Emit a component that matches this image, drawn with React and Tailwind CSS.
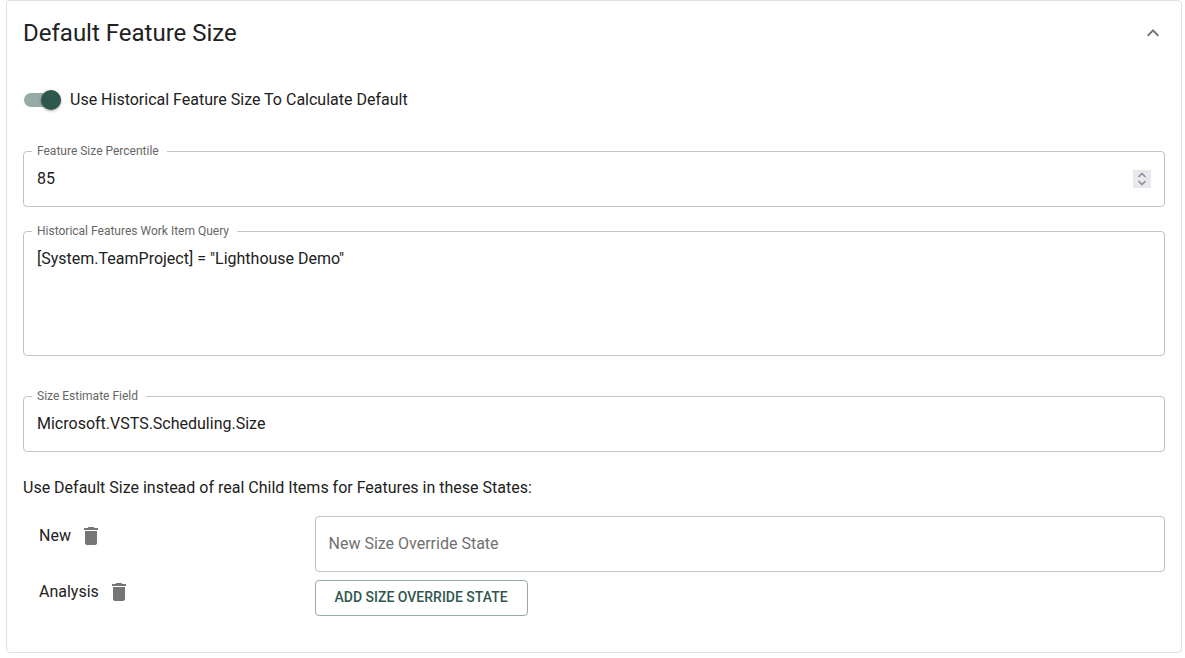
import { useState } from 'react';

function OutlinedField({ id, label, children }) {
  return (
    <div className="relative flex">
      {children}
      <label
        htmlFor={id}
        className="absolute -top-2 left-[9px] bg-white pr-2 pl-[5px] text-[12px] leading-4 text-[#666666]"
      >
        {label}
      </label>
    </div>
  );
}

const inputClass =
  'block h-14 w-full min-w-0 rounded border border-[#c4c4c4] bg-white px-[13px] pb-[2px] text-base text-[#212121] outline-none placeholder:text-[#707070] focus:border-[#30574e]';

function ExpandLessIcon() {
  return (
    <svg viewBox="0 0 24 24" className="size-6" fill="currentColor" aria-hidden="true">
      <path d="m12 8-6 6 1.41 1.41L12 10.83l4.59 4.58L18 14z" />
    </svg>
  );
}

function DeleteIcon() {
  return (
    <svg viewBox="0 0 24 24" className="size-6" fill="currentColor" aria-hidden="true">
      <path d="M6 19c0 1.1.9 2 2 2h8c1.1 0 2-.9 2-2V7H6zM19 4h-3.5l-1-1h-5l-1 1H5v2h14z" />
    </svg>
  );
}

function StepIcon({ d }) {
  return (
    <svg viewBox="0 0 18 9" className="h-[9px] w-[18px]" fill="none" stroke="#8f8f9d" strokeWidth="1.6" aria-hidden="true">
      <path d={d} />
    </svg>
  );
}

export default function App() {
  const [open, setOpen] = useState(true);
  const [historical, setHistorical] = useState(true);
  const [percentile, setPercentile] = useState(85);
  const [query, setQuery] = useState('[System.TeamProject] = "Lighthouse Demo"');
  const [sizeField, setSizeField] = useState('Microsoft.VSTS.Scheduling.Size');
  const [states, setStates] = useState(['New', 'Analysis']);
  const [draft, setDraft] = useState('');

  const addState = () => {
    const name = draft.trim();
    if (name && !states.includes(name)) setStates([...states, name]);
    setDraft('');
  };

  return (
    <main className="bg-white pr-[3px] pb-[5px] pl-[6px] font-[Roboto,sans-serif] text-base text-[#212121]">
      <section className="rounded border border-[#e0e0e0] px-4 pt-4 pb-9">
        <header className="flex items-center justify-between">
          <h2 className="text-2xl leading-8">Default Feature Size</h2>
          <button
            type="button"
            aria-label="Toggle section"
            aria-expanded={open}
            onClick={() => setOpen(!open)}
            className="flex text-[#757575]"
          >
            <ExpandLessIcon />
          </button>
        </header>

        {open && (
          <div className="pt-8">
            <label className="flex h-[38px] cursor-pointer items-center gap-[9px]">
              <input
                type="checkbox"
                role="switch"
                checked={historical}
                onChange={(e) => setHistorical(e.target.checked)}
                className="peer sr-only"
              />
              <span className="ml-px flex h-[14px] w-[37px] items-center rounded-full bg-[#97aba6] peer-checked:justify-end">
                <span className="size-5 rounded-full bg-[#30574e] shadow-[0_1px_3px_rgba(0,0,0,0.35)]" />
              </span>
              <span>Use Historical Feature Size To Calculate Default</span>
            </label>

            <div className="mt-8">
              <OutlinedField id="percentile" label="Feature Size Percentile">
                <input
                  id="percentile"
                  type="number"
                  value={percentile}
                  onChange={(e) => setPercentile(Number(e.target.value))}
                  className={`${inputClass} [appearance:textfield] [&::-webkit-inner-spin-button]:appearance-none`}
                />
                <div className="absolute top-[19px] right-[14px] flex flex-col bg-[#e9e9ed]">
                  <button type="button" aria-label="Increase" onClick={() => setPercentile(percentile + 1)}>
                    <StepIcon d="M5.5 7 9 3.5 12.5 7" />
                  </button>
                  <button type="button" aria-label="Decrease" onClick={() => setPercentile(percentile - 1)}>
                    <StepIcon d="M5.5 2 9 5.5 12.5 2" />
                  </button>
                </div>
              </OutlinedField>
            </div>

            <div className="mt-6">
              <OutlinedField id="query" label="Historical Features Work Item Query">
                <textarea
                  id="query"
                  value={query}
                  onChange={(e) => setQuery(e.target.value)}
                  className="block h-[125px] w-full resize-none rounded border border-[#c4c4c4] bg-white px-[13px] py-[15px] text-base leading-6 text-[#212121] outline-none focus:border-[#30574e]"
                />
              </OutlinedField>
            </div>

            <div className="mt-10">
              <OutlinedField id="size-field" label="Size Estimate Field">
                <input
                  id="size-field"
                  type="text"
                  value={sizeField}
                  onChange={(e) => setSizeField(e.target.value)}
                  className={inputClass}
                />
              </OutlinedField>
            </div>

            <p className="mt-6">Use Default Size instead of real Child Items for Features in these States:</p>

            <div className="mt-4 grid grid-cols-[1fr_3fr] gap-2">
              <ul className="flex flex-col gap-4 pl-4">
                {states.map((state) => (
                  <li key={state} className="flex h-10 items-center gap-2">
                    <span>{state}</span>
                    <button
                      type="button"
                      aria-label={`Delete ${state}`}
                      onClick={() => setStates(states.filter((s) => s !== state))}
                      className="flex text-[#757575]"
                    >
                      <DeleteIcon />
                    </button>
                  </li>
                ))}
              </ul>
              <div className="flex flex-col items-start gap-2">
                <input
                  type="text"
                  aria-label="New Size Override State"
                  placeholder="New Size Override State"
                  value={draft}
                  onChange={(e) => setDraft(e.target.value)}
                  className={inputClass}
                />
                <button
                  type="button"
                  onClick={addState}
                  className="h-9 rounded border border-[#97aba6] px-[19px] pb-[2px] text-sm font-medium text-[#30574e] uppercase"
                >
                  Add Size Override State
                </button>
              </div>
            </div>
          </div>
        )}
      </section>
    </main>
  );
}
